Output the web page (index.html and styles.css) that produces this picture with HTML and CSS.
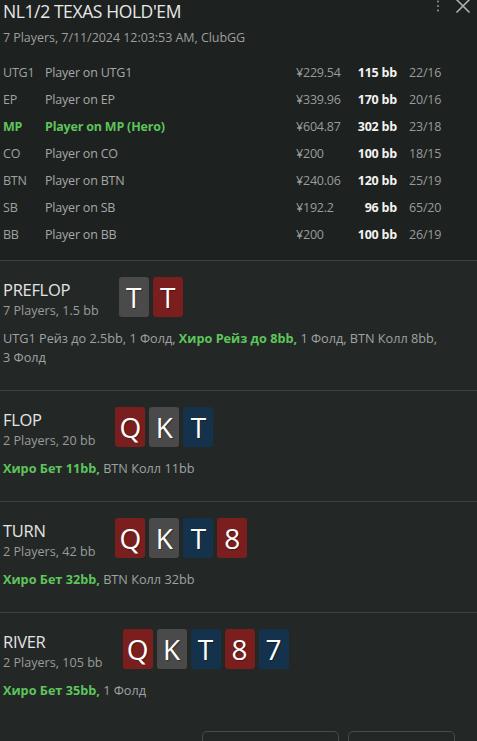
FILE: index.html
```html
<!DOCTYPE html>
<html lang="ru">
<head>
<meta charset="utf-8">
<title>NL1/2 TEXAS HOLD'EM</title>
<link rel="stylesheet" href="styles.css">
</head>
<body>
<div class="panel">
  <header class="head">
    <div class="title-row">
      <h1 class="title">NL1/2 TEXAS HOLD'EM</h1>
      <div class="tools">
        <svg class="kebab" width="4" height="13" viewBox="0 0 4 13"><circle cx="2" cy="1.5" r="1.1"/><circle cx="2" cy="6" r="1.1"/><circle cx="2" cy="10.5" r="1.1"/></svg>
        <svg class="close" width="16" height="14" viewBox="0 0 16 14"><path d="M1.5 -0.5 L14.5 12.5 M14.5 -0.5 L1.5 12.5"/></svg>
      </div>
    </div>
    <div class="meta">7 Players, 7/11/2024 12:03:53 AM, ClubGG</div>
    <div class="players">
      <span class="pos">UTG1</span><span class="name">Player on UTG1</span><span class="stack">¥229.54</span><span class="bb">115 bb</span><span class="stat">22/16</span>
      <span class="pos">EP</span><span class="name">Player on EP</span><span class="stack">¥339.96</span><span class="bb">170 bb</span><span class="stat">20/16</span>
      <span class="pos hero">MP</span><span class="name hero">Player on MP (Hero)</span><span class="stack">¥604.87</span><span class="bb">302 bb</span><span class="stat">23/18</span>
      <span class="pos">CO</span><span class="name">Player on CO</span><span class="stack">¥200</span><span class="bb">100 bb</span><span class="stat">18/15</span>
      <span class="pos">BTN</span><span class="name">Player on BTN</span><span class="stack">¥240.06</span><span class="bb">120 bb</span><span class="stat">25/19</span>
      <span class="pos">SB</span><span class="name">Player on SB</span><span class="stack">¥192.2</span><span class="bb">96 bb</span><span class="stat">65/20</span>
      <span class="pos">BB</span><span class="name">Player on BB</span><span class="stack">¥200</span><span class="bb">100 bb</span><span class="stat">26/19</span>
    </div>
  </header>

  <section class="street">
    <div class="street-row">
      <div class="street-info">
        <div class="street-name">PREFLOP</div>
        <div class="street-sub">7 Players, 1.5 bb</div>
      </div>
      <div class="cards">
        <span class="card grey">T</span><span class="card red">T</span>
      </div>
    </div>
    <p class="actions">UTG1 Рейз до 2.5bb, 1&nbsp;Фолд, <b class="hero">Хиро Рейз до 8bb,</b> 1&nbsp;Фолд, BTN Колл 8bb, 3&nbsp;Фолд</p>
  </section>

  <section class="street">
    <div class="street-row">
      <div class="street-info">
        <div class="street-name">FLOP</div>
        <div class="street-sub">2 Players, 20 bb</div>
      </div>
      <div class="cards">
        <span class="card red">Q</span><span class="card grey">K</span><span class="card blue">T</span>
      </div>
    </div>
    <p class="actions"><b class="hero">Хиро Бет 11bb,</b> BTN Колл 11bb</p>
  </section>

  <section class="street">
    <div class="street-row">
      <div class="street-info">
        <div class="street-name">TURN</div>
        <div class="street-sub">2 Players, 42 bb</div>
      </div>
      <div class="cards">
        <span class="card red">Q</span><span class="card grey">K</span><span class="card blue">T</span><span class="card red">8</span>
      </div>
    </div>
    <p class="actions"><b class="hero">Хиро Бет 32bb,</b> BTN Колл 32bb</p>
  </section>

  <section class="street last">
    <div class="street-row">
      <div class="street-info">
        <div class="street-name">RIVER</div>
        <div class="street-sub">2 Players, 105 bb</div>
      </div>
      <div class="cards">
        <span class="card red">Q</span><span class="card grey">K</span><span class="card blue">T</span><span class="card red">8</span><span class="card blue">7</span>
      </div>
    </div>
    <p class="actions"><b class="hero">Хиро Бет 35bb,</b> 1&nbsp;Фолд</p>
  </section>

  <footer class="foot">
    <button class="btn btn-wide" type="button"></button>
    <button class="btn btn-narrow" type="button"></button>
  </footer>
</div>
</body>
</html>
```

FILE: styles.css
```css
html, body {
  margin: 0;
  padding: 0;
  overflow: hidden;
  background: #232827;
}
body {
  font-family: "Open Sans", "Noto Sans", sans-serif;
  color: #a3a3a3;
}
.panel {
  width: 477px;
}
.head {
  background: #1d211f;
  padding: 0 0 12px 3px;
  border-bottom: 1px solid #3c403f;
}
.title-row {
  display: flex;
  justify-content: space-between;
  align-items: flex-start;
}
.title {
  margin: 0;
  font-size: 17.5px;
  font-weight: 400;
  line-height: 22px;
  color: #e8e8e8;
  letter-spacing: -0.4px;
}
.tools {
  display: flex;
  align-items: flex-start;
  gap: 15px;
  padding-right: 6px;
}
.kebab {
  fill: #8a8c8b;
}
.close {
  stroke: #b0b2b1;
  stroke-width: 1.6;
  fill: none;
}
.meta {
  margin-top: 7px;
  font-size: 12.5px;
  line-height: 18px;
  color: #9d9f9e;
  letter-spacing: -0.05px;
}
.players {
  margin-top: 12px;
  display: grid;
  grid-template-columns: 42px 1fr 50px 51px 80px;
  grid-auto-rows: 27px;
  align-items: center;
  font-size: 12.5px;
  letter-spacing: -0.2px;
}
.pos { color: #a0a2a1; }
.name { color: #a6a8a7; }
.stack { color: #9a9c9b; }
.bb {
  color: #f2f2f2;
  font-weight: 700;
  text-align: right;
}
.stat {
  color: #9a9c9b;
  padding-left: 12px;
}
.hero {
  color: #5ec45b;
  font-weight: 700;
}
.street {
  padding: 16px 3px 23px 3px;
  border-bottom: 1px solid #3c403f;
}
.street.last {
  border-bottom: none;
}
.street-row {
  display: flex;
  align-items: flex-start;
  gap: 20px;
}
.street-info {
  padding-top: 2px;
}
.street-name {
  font-size: 16.5px;
  line-height: 21px;
  color: #e4e4e4;
  letter-spacing: -0.3px;
}
.street-sub {
  font-size: 12.6px;
  line-height: 21px;
  color: #9a9c9b;
}
.cards {
  display: flex;
  gap: 4px;
}
.card {
  width: 30px;
  height: 40px;
  border-radius: 3px;
  display: flex;
  align-items: center;
  justify-content: center;
  font-size: 28px;
  line-height: 1;
  color: #ffffff;
  text-shadow: 1px 1px 1px rgba(0, 0, 0, 0.35);
}
.card.grey { background: #4a4a4a; }
.card.red { background: #7a1f1e; }
.card.blue { background: #15324d; }
.actions {
  margin: 8px 0 0;
  font-size: 12.7px;
  line-height: 19px;
  color: #a0a2a1;
}
.actions b { font-weight: 700; }
.foot {
  display: flex;
  justify-content: flex-end;
  gap: 9px;
  padding: 8px 22px 0 0;
}
.btn {
  height: 36px;
  background: transparent;
  border: 1px solid #474b4a;
  border-radius: 5px;
  padding: 0;
}
.btn-wide { width: 137px; }
.btn-narrow { width: 107px; }
```
